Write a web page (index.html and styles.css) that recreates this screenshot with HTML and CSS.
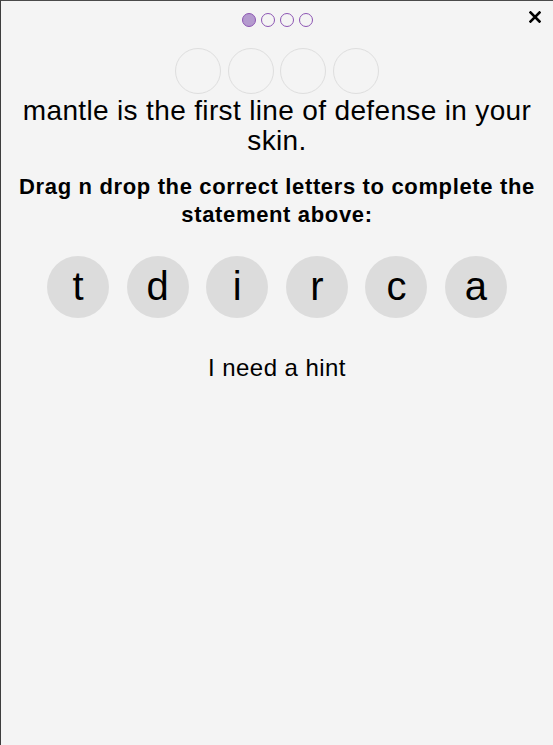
FILE: index.html
```html
<!DOCTYPE html>
<html>
<head>
<meta charset="utf-8">
<link rel="stylesheet" href="styles.css">
</head>
<body>
<div class="panel">
  <button class="close" aria-label="Close">
    <svg width="12" height="12" viewBox="0 0 12 12"><path d="M1.5 1.5 L10.5 10.5 M10.5 1.5 L1.5 10.5" stroke="#000" stroke-width="2.6" stroke-linecap="square"/></svg>
  </button>
  <div class="progress">
    <span class="dot active"></span><span class="dot"></span><span class="dot"></span><span class="dot"></span>
  </div>
  <div class="slots">
    <span class="slot"></span><span class="slot"></span><span class="slot"></span><span class="slot"></span>
  </div>
  <p class="question">mantle is the first line of defense in your skin.</p>
  <p class="instruction">Drag n drop the correct letters to complete the statement above:</p>
  <div class="letters">
    <span class="letter">t</span><span class="letter">d</span><span class="letter">i</span><span class="letter">r</span><span class="letter">c</span><span class="letter">a</span>
  </div>
  <p class="hint">I need a hint</p>
</div>
</body>
</html>
```
FILE: styles.css
```css
html, body {
  margin: 0;
  padding: 0;
  background: #f4f4f4;
}
body {
  font-family: "Liberation Sans", Arial, sans-serif;
  color: #000;
}
.panel {
  position: relative;
  box-sizing: border-box;
  height: 745px;
  border-top: 1px solid #4a4a4a;
  border-left: 1px solid #3d3d3d;
  background: #f4f4f4;
  display: flex;
  flex-direction: column;
  align-items: center;
  padding: 12px 10px 0;
}
.close {
  position: absolute;
  top: 10px;
  right: 12px;
  width: 12px;
  height: 12px;
  padding: 0;
  border: 0;
  background: none;
  display: block;
}
.close svg { display: block; }
.progress {
  display: flex;
  gap: 5px;
  height: 14px;
}
.dot {
  box-sizing: border-box;
  width: 14px;
  height: 14px;
  border-radius: 50%;
  border: 1.5px solid #8c55b3;
}
.dot.active {
  background: #b49ace;
}
.slots {
  display: flex;
  gap: 6.5px;
  margin-top: 21px;
}
.slot {
  box-sizing: border-box;
  width: 46px;
  height: 46px;
  border-radius: 50%;
  border: 1px solid #dedede;
}
.question {
  margin: 2px 0 0;
  font-size: 28px;
  letter-spacing: 0.35px;
  line-height: 30px;
  text-align: center;
}
.instruction {
  margin: 17px 0 0;
  font-size: 22px;
  letter-spacing: 0.65px;
  font-weight: bold;
  line-height: 28px;
  text-align: center;
}
.letters {
  display: flex;
  gap: 17.6px;
  margin-top: 27px;
}
.letter {
  width: 62px;
  height: 62px;
  border-radius: 50%;
  background: #dcdcdc;
  display: flex;
  align-items: center;
  justify-content: center;
  font-size: 40px;
  line-height: 1;
  padding-bottom: 2px;
  box-sizing: border-box;
}
.hint {
  margin: 36px 0 0;
  font-size: 24px;
  letter-spacing: 0.45px;
  line-height: 28px;
  text-align: center;
}
```
